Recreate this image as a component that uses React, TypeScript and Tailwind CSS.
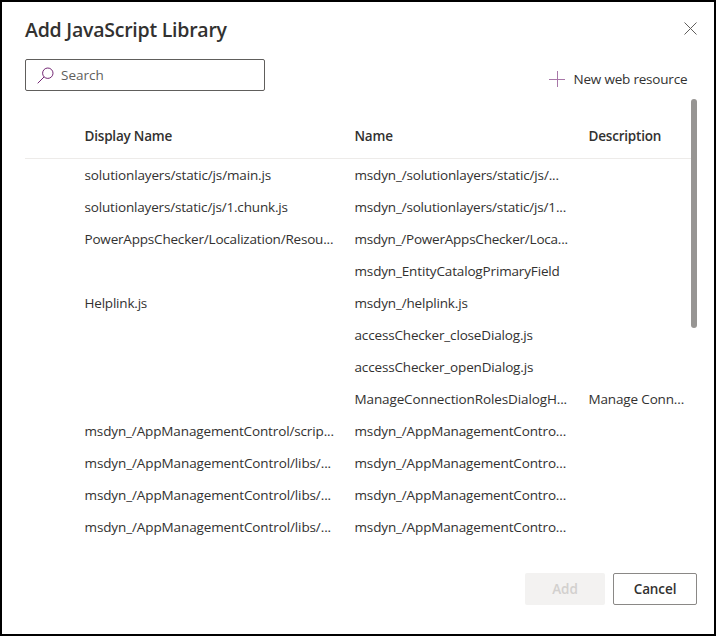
import React from "react";

type Cell = { text: string; tracking: string };
type Row = { display?: Cell; name: Cell; description?: Cell };

const control: Cell = { text: "msdyn_/AppManagementContro...", tracking: "tracking-[-0.14px]" };
const libs: Cell = { text: "msdyn_/AppManagementControl/libs/...", tracking: "tracking-[-0.11px]" };

const rows: Row[] = [
  {
    display: { text: "solutionlayers/static/js/main.js", tracking: "tracking-[-0.15px]" },
    name: { text: "msdyn_/solutionlayers/static/js/...", tracking: "tracking-[-0.16px]" },
  },
  {
    display: { text: "solutionlayers/static/js/1.chunk.js", tracking: "tracking-[-0.17px]" },
    name: { text: "msdyn_/solutionlayers/static/js/1...", tracking: "tracking-[-0.17px]" },
  },
  {
    display: { text: "PowerAppsChecker/Localization/Resou...", tracking: "tracking-[-0.19px]" },
    name: { text: "msdyn_/PowerAppsChecker/Loca...", tracking: "tracking-[-0.22px]" },
  },
  { name: { text: "msdyn_EntityCatalogPrimaryField", tracking: "tracking-[-0.15px]" } },
  {
    display: { text: "Helplink.js", tracking: "tracking-[-0.2px]" },
    name: { text: "msdyn_/helplink.js", tracking: "tracking-[-0.17px]" },
  },
  { name: { text: "accessChecker_closeDialog.js", tracking: "tracking-[-0.16px]" } },
  { name: { text: "accessChecker_openDialog.js", tracking: "tracking-[-0.16px]" } },
  {
    name: { text: "ManageConnectionRolesDialogH...", tracking: "tracking-[-0.12px]" },
    description: { text: "Manage Conn...", tracking: "tracking-[-0.15px]" },
  },
  { display: { text: "msdyn_/AppManagementControl/scrip...", tracking: "tracking-[-0.13px]" }, name: control },
  { display: libs, name: control },
  { display: libs, name: control },
  { display: libs, name: control },
];

function CellText({ cell }: { cell?: Cell }) {
  return <span className={cell?.tracking}>{cell?.text}</span>;
}

export default function App() {
  return (
    <div className="flex h-[636px] w-[716px] flex-col overflow-hidden border-2 border-black bg-white font-['Open_Sans','Noto_Sans',sans-serif] text-[13.5px] text-[#323130]">
      <header className="flex h-[57px] shrink-0 justify-between pl-[23px] pr-[17px]">
        <h1 className="pt-[15px] text-[19.5px] font-semibold leading-[26px] tracking-[-0.24px]">Add JavaScript Library</h1>
        <button aria-label="Close" className="mt-[20px] h-[13px] w-[13px]">
          <svg viewBox="0 0 13 13" className="h-[13px] w-[13px]" fill="none" stroke="#605e5c" strokeWidth="1">
            <path d="M.5 .5l12 12M12.5 .5l-12 12" />
          </svg>
        </button>
      </header>

      <div className="flex h-[40px] shrink-0 justify-between pl-[23px] pr-[24px]">
        <label className="flex h-[32px] w-[240px] items-center rounded-[2px] border border-[#605e5c] pl-[11px] text-[#605e5c]">
          <svg viewBox="0 0 17 17" className="h-[17px] w-[17px]" fill="none" stroke="#742774" strokeWidth="1">
            <circle cx="10.8" cy="6.2" r="5.2" />
            <path d="M7 10L.7 16.3" />
          </svg>
          <span className="pl-[7px]">Search</span>
        </label>
        <button className="flex h-[40px] items-center">
          <svg viewBox="0 0 16 16" className="h-[16px] w-[16px]" fill="none" stroke="#a877a8" strokeWidth="1">
            <path d="M8.5 0v16M0 8.5h16" />
          </svg>
          <span className="w-[125px] whitespace-nowrap pl-[8.5px] text-left tracking-[-0.2px]">New web resource</span>
        </button>
      </div>

      <main className="flex h-[449px] shrink-0 pl-[23px] pr-[17px]">
        <div className="w-[666px]">
          <div className="grid h-[60px] grid-cols-[270px_234px_1fr] border-b border-[#edebe9] pl-[59.5px] pt-[16px] font-semibold leading-[42px] tracking-[-0.2px]">
            <span>Display Name</span>
            <span>Name</span>
            <span>Description</span>
          </div>
          {rows.map((row, i) => (
            <div key={i} className="grid h-[32px] grid-cols-[270px_234px_1fr] whitespace-nowrap pl-[59.5px] leading-[32px]">
              <CellText cell={row.display} />
              <CellText cell={row.name} />
              <CellText cell={row.description} />
            </div>
          ))}
        </div>
        <div className="h-[229px] w-[6px] rounded-full bg-[#979593]" />
      </main>

      <footer className="flex justify-end gap-[8px] pr-[17px] pt-[25px] font-semibold tracking-[-0.1px]">
        <button disabled className="h-[32px] w-[80px] rounded-[2px] bg-[#f3f2f1] text-[#d2d0ce]">Add</button>
        <button className="h-[32px] w-[84px] rounded-[2px] border border-[#8a8886]">Cancel</button>
      </footer>
    </div>
  );
}
